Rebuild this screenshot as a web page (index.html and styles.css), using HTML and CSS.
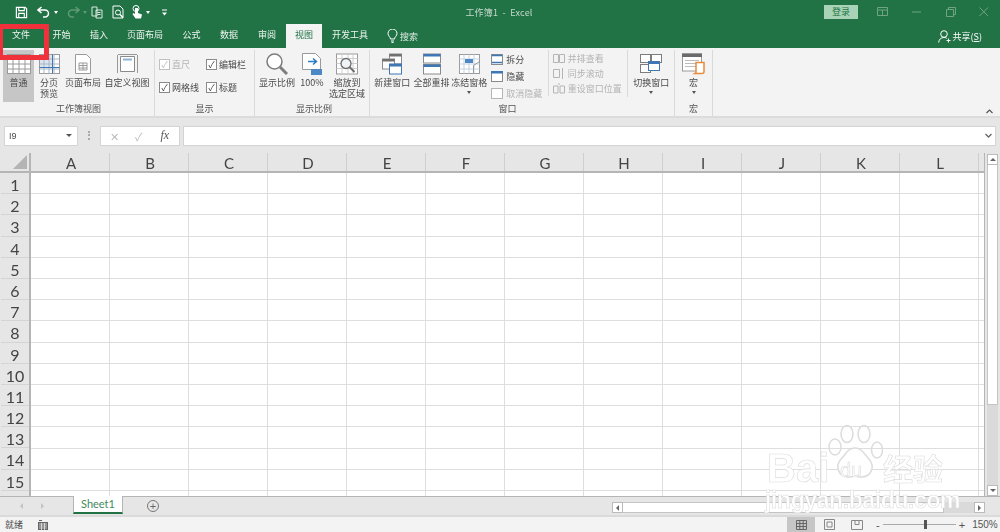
FILE: index.html
```html
<!DOCTYPE html>
<html lang="zh-CN">
<head>
    <meta charset="UTF-8">
    <meta name="viewport" content="width=device-width, initial-scale=1.0">
    <title>工作簿1 - Excel</title>
    <link rel="stylesheet" href="styles.css">
</head>
<body>
    <!-- Title bar -->
    <header class="titlebar">
        <div class="qat">
            <svg class="qat-save" width="13" height="13" viewBox="0 0 14 14"><path d="M1.500 1.500h9.500l1.500 1.500v9.500h-11z" fill="none" stroke="#fff" stroke-width="1.300"/><path d="M4 1.500v3.500h6v-3.500M4 12.500v-4.500h6v4.500" fill="none" stroke="#fff" stroke-width="1.200"/></svg>
            <svg class="qat-undo" width="14" height="12" viewBox="0 0 14 12"><path d="M4.500 1l-3.500 3 3.500 3M1.500 4h6.500a3.500 3.500 0 0 1 0 7h-2" fill="none" stroke="#fff" stroke-width="1.500"/></svg>
            <span class="qat-caret"></span>
            <svg class="qat-redo" width="14" height="12" viewBox="0 0 14 12"><path d="M9.500 1l3.500 3-3.500 3M12.500 4h-6.500a3.500 3.500 0 0 0 0 7h2" fill="none" stroke="#5f9a76" stroke-width="1.500"/></svg>
            <span class="qat-caret dim"></span>
            <svg class="qat-copy" width="12" height="13" viewBox="0 0 12 13"><path d="M1 1h5v9h-5zM5 4h6v8h-6z" fill="#217346" stroke="#dfe9e2"/><path d="M6.500 6.500h3M6.500 8.500h3" stroke="#dfe9e2"/></svg>
            <svg class="qat-preview" width="13" height="14" viewBox="0 0 13 14"><path d="M1 1h7l3 3v9h-10z" fill="none" stroke="#fff"/><circle cx="6" cy="7.500" r="2.500" fill="none" stroke="#fff"/><path d="M8 9.500l3 3" stroke="#fff" stroke-width="1.500"/></svg>
            <svg class="qat-touch" width="12" height="14" viewBox="0 0 12 14"><circle cx="5" cy="3.500" r="3" fill="none" stroke="#fff"/><path d="M4 3v6l-1.500-1-1 1 3 4.500h5.500l1-4-4-1.500v-5z" fill="#fff"/></svg>
            <span class="qat-caret"></span>
            <svg class="qat-more" width="7" height="7" viewBox="0 0 7 7"><path d="M1 1h5" stroke="#fff"/><path d="M1 3.500h5l-2.500 3z" fill="#fff"/></svg>
        </div>
        <div class="doc-title">工作簿1&nbsp; -&nbsp; Excel</div>
        <div class="win-controls">
            <button class="signin">登录</button>
            <svg class="ctl-ribbon" width="12" height="10" viewBox="0 0 12 10"><path d="M.5.500h10v8h-10zM.5 3h10M5.500 3v5.500" fill="none" stroke="#6fa583"/></svg>
            <svg class="ctl-min" width="10" height="2" viewBox="0 0 10 2"><path d="M0 1h9" stroke="#6fa583"/></svg>
            <svg class="ctl-max" width="10" height="10" viewBox="0 0 10 10"><path d="M.5 2.500h7v7h-7zM2.500 2.500v-2h7v7h-2" fill="none" stroke="#6fa583"/></svg>
            <svg class="ctl-close" width="10" height="10" viewBox="0 0 10 10"><path d="M.5.500l8.500 8.500M9 .5l-8.500 8.500" stroke="#6fa583"/></svg>
        </div>
    </header>

    <!-- Ribbon tabs -->
    <nav class="tabs">
        <a class="tab w42">文件</a>
        <a class="tab w39">开始</a>
        <a class="tab w36">插入</a>
        <a class="tab w56">页面布局</a>
        <a class="tab w37">公式</a>
        <a class="tab w38">数据</a>
        <a class="tab w38">审阅</a>
        <a class="tab w36 active">视图</a>
        <a class="tab w56">开发工具</a>
        <div class="search">
            <svg width="11" height="14" viewBox="0 0 11 14"><path d="M3.500 10c0-2-2.500-3-2.500-5.500a4.500 4.500 0 0 1 9 0c0 2.500-2.500 3.500-2.500 5.500zM4 12h3M4.500 13.500h2" fill="none" stroke="#fff"/></svg>
            <span>搜索</span>
        </div>
        <div class="share">
            <svg width="13" height="13" viewBox="0 0 13 13"><circle cx="6" cy="4" r="3.300" fill="none" stroke="#fff"/><path d="M.7 12.500c.3-3 2-5 5.300-5 1.200 0 2 .2 2.800.8M8.500 10.500h4M10.500 8.500v4" fill="none" stroke="#fff"/></svg>
            <span>共享(<u>S</u>)</span>
        </div>
    </nav>

    <!-- Ribbon -->
    <section class="ribbon">
        <div class="group g-book">
            <div class="group-body">
                <div class="big selected w31">
                    <svg class="ico" width="24" height="20" viewBox="0 0 24 20"><rect x=".5" y=".5" width="23" height="19" fill="#fff" stroke="#9a9a9a"/><path d="M.5 5h23M.5 10h23M.5 15h23M6 .5v19M12 .5v19M18 .5v19" stroke="#9a9a9a"/></svg>
                    <span>普通</span>
                </div>
                <div class="big w28">
                    <svg class="ico" width="21" height="20" viewBox="0 0 21 20"><rect x=".5" y=".5" width="20" height="19" fill="#fff" stroke="#9a9a9a"/><rect x="1" y="1" width="12" height="12" fill="#dbe5f1"/><path d="M.5 5h20M.5 10h20M.5 15h20M5 .5v19M10 .5v19M15 .5v19" stroke="#a9b5c4"/><path d="M13.500 .5v19M.5 13.500h20" stroke="#3f77b5"/></svg>
                    <span>分页<br>预览</span>
                </div>
                <div class="big w36 gap-right">
                    <svg class="ico" width="16" height="20" viewBox="0 0 16 20"><path d="M.5.500h11l4 4v15h-15z" fill="#fff" stroke="#9a9a9a"/><path d="M4 9h8v7h-8zM4 11.500h8M4 14h8M8 9v7" fill="none" stroke="#9a9a9a"/></svg>
                    <span>页面布局</span>
                </div>
                <div class="big w46">
                    <svg class="ico" width="21" height="20" viewBox="0 0 21 20"><path d="M3.500 2.500h14v15h-14z" fill="#fff" stroke="#8a8a8a"/><rect x="6" y="4.500" width="9" height="2" fill="#8fb2d6"/><path d="M.5 1v18M20.500 1v18M1 .5h19" stroke="#9a9a9a" fill="none"/></svg>
                    <span>自定义视图</span>
                </div>
            </div>
            <div class="group-label">工作簿视图</div>
        </div>

        <div class="group g-show">
            <div class="check-grid">
                <label class="check off"><i>✓</i>直尺</label>
                <label class="check"><i>✓</i>编辑栏</label>
                <label class="check"><i>✓</i>网格线</label>
                <label class="check"><i>✓</i>标题</label>
            </div>
            <div class="group-label">显示</div>
        </div>

        <div class="group g-zoom">
            <div class="group-body">
                <div class="big w36">
                    <svg class="ico" width="22" height="22" viewBox="0 0 22 22"><circle cx="8.500" cy="8.500" r="7.500" fill="#fff" stroke="#7d7d7d" stroke-width="1.500"/><path d="M14 14l7 7" stroke="#7d7d7d" stroke-width="3"/></svg>
                    <span>显示比例</span>
                </div>
                <div class="big w34">
                    <svg class="ico" width="20" height="22" viewBox="0 0 20 22"><path d="M.5.500h13l5 5v11h-18z" fill="#fff" stroke="#9a9a9a"/><path d="M6 8.500h8M11 5.500l3.500 3-3.500 3" fill="none" stroke="#2b7cc0" stroke-width="1.500"/><rect x="9" y="16" width="11" height="6" fill="#4b88c4"/></svg>
                    <span>100%</span>
                </div>
                <div class="big w36">
                    <svg class="ico" width="22" height="21" viewBox="0 0 22 21"><rect x=".5" y=".5" width="21" height="20" fill="#fff" stroke="#9a9a9a"/><path d="M.5 5h21M.5 10h21M.5 15h21M6 .5v20M12 .5v20M17 .5v20" stroke="#cdcdcd"/><circle cx="10" cy="10" r="5" fill="#eef3f7" stroke="#6d6d6d" stroke-width="1.300"/><path d="M13.500 13.500l5 5" stroke="#6d6d6d" stroke-width="2"/></svg>
                    <span>缩放到<br>选定区域</span>
                </div>
            </div>
            <div class="group-label">显示比例</div>
        </div>

        <div class="group g-window">
            <div class="group-body">
                <div class="big first-win">
                    <svg class="ico" width="20" height="21" viewBox="0 0 20 21"><rect x="7.500" y=".5" width="12" height="10" fill="#fff" stroke="#8a8a8a"/><rect x="7.500" y=".5" width="12" height="2.500" fill="#707070"/><rect x=".5" y="5.500" width="12" height="10" fill="#fff" stroke="#8a8a8a"/><rect x=".5" y="5.500" width="12" height="2.500" fill="#707070"/><rect x="7.500" y="10.500" width="12" height="10" fill="#fff" stroke="#3f77b5"/><rect x="7.500" y="10.500" width="12" height="2.500" fill="#3f77b5"/></svg>
                    <span>新建窗口</span>
                </div>
                <div class="big w38">
                    <svg class="ico" width="18" height="21" viewBox="0 0 18 21"><rect x=".5" y=".5" width="17" height="9" fill="#fff" stroke="#8a8a8a"/><rect x=".5" y=".5" width="17" height="2.500" fill="#3f77b5"/><rect x=".5" y="11" width="17" height="9.500" fill="#fff" stroke="#8a8a8a"/><rect x=".5" y="11" width="17" height="2.500" fill="#3f77b5"/></svg>
                    <span>全部重排</span>
                </div>
                <div class="big w38">
                    <svg class="ico" width="21" height="20" viewBox="0 0 21 20"><rect x=".5" y=".5" width="20" height="19" fill="#fff" stroke="#9a9a9a"/><path d="M.5 5h20M.5 10h20M.5 15h20M5 .5v19M10 .5v19M15 .5v19" stroke="#c4d3e3"/><rect x="6" y="5" width="8" height="4" fill="#4b88c4"/><path d="M14.500 19.500v-8l6-4" fill="none" stroke="#9a9a9a"/></svg>
                    <span>冻结窗格</span>
                    <b class="caret"></b>
                </div>
                <div class="small-col w58">
                    <div class="small"><svg width="12" height="11" viewBox="0 0 12 11"><rect x=".5" y=".5" width="11" height="10" fill="#fff" stroke="#8a8a8a"/><path d="M1 1.500h10M1 8.500h10" stroke="#3f77b5" stroke-width="1.500"/></svg>拆分</div>
                    <div class="small"><svg width="12" height="11" viewBox="0 0 12 11"><rect x=".5" y=".5" width="11" height="10" fill="#fff" stroke="#8a8a8a"/><rect x="0" y="0" width="12" height="2.500" fill="#3f77b5"/></svg>隐藏</div>
                    <div class="small off"><svg width="12" height="11" viewBox="0 0 12 11"><rect x=".5" y=".5" width="11" height="10" fill="#fff" stroke="#b5b5b5"/></svg>取消隐藏</div>
                </div>
                <div class="small-col w80 with-rule">
                    <div class="small off"><svg width="12" height="11" viewBox="0 0 12 11"><path d="M.5 1.500h5v8h-5zM6.500 1.500h5v8h-5z" fill="none" stroke="#b5b5b5"/></svg>并排查看</div>
                    <div class="small off"><svg width="12" height="11" viewBox="0 0 12 11"><path d="M.5 1.500h6v8h-6zM9.500 0v11" fill="none" stroke="#b5b5b5"/></svg>同步滚动</div>
                    <div class="small off"><svg width="12" height="11" viewBox="0 0 12 11"><path d="M.5 3h4.500v7h-4.500zM7 3h4.500v7h-4.500zM5 1h2" fill="none" stroke="#b5b5b5"/></svg>重设窗口位置</div>
                </div>
                <div class="big w47 with-rule">
                    <svg class="ico" width="22" height="20" viewBox="0 0 22 20"><rect x=".5" y=".5" width="10" height="8" fill="#fff" stroke="#7d7d7d"/><rect x="11.500" y=".5" width="10" height="8" fill="#fff" stroke="#7d7d7d"/><rect x=".5" y="10.500" width="10" height="8" fill="#fff" stroke="#7d7d7d"/><rect x="8.500" y="7.500" width="11" height="9" fill="#fff" stroke="#3f77b5"/><rect x="8.500" y="7.500" width="11" height="2.500" fill="#3f77b5"/></svg>
                    <span>切换窗口</span>
                    <b class="caret"></b>
                </div>
            </div>
            <div class="group-label label-window">窗口</div>
        </div>

        <div class="group g-macro">
            <div class="group-body">
                <div class="big w38">
                    <svg class="ico" width="23" height="21" viewBox="0 0 23 21"><rect x=".5" y=".5" width="19" height="17" fill="#fff" stroke="#9a9a9a"/><rect x="0" y="0" width="20" height="3.500" fill="#6b6b6b"/><path d="M3 7h14M3 10h14M3 13h14" stroke="#bcbcbc"/><path d="M14 9h8v9a2 2 0 0 1-2 2h-7a2 2 0 0 0 1-2z" fill="#fff" stroke="#e88b3a" stroke-width="1.500"/></svg>
                    <span>宏</span>
                    <b class="caret"></b>
                </div>
            </div>
            <div class="group-label">宏</div>
        </div>
        <svg class="collapse" width="7" height="5" viewBox="0 0 7 5"><path d="M.5 4l3-3 3 3" fill="none" stroke="#555" stroke-width="1.200"/></svg>
    </section>

    <!-- Formula bar -->
    <section class="formula">
        <div class="namebox">I9<b class="caret"></b></div>
        <div class="grip"></div>
        <div class="fx-box">
            <span class="fx-x">✕</span><span class="fx-ok">✓</span><em>fx</em>
        </div>
        <div class="fx-input"><svg width="7" height="5" viewBox="0 0 7 5"><path d="M.5 1l3 3 3-3" fill="none" stroke="#666" stroke-width="1.300"/></svg></div>
    </section>

    <!-- Sheet -->
    <main class="sheet-wrap">
        <div class="sheet">
            <div class="col-head">
                <div class="corner"><span></span></div>
                <div>A</div><div>B</div><div>C</div><div>D</div><div>E</div><div>F</div>
                <div>G</div><div>H</div><div>I</div><div>J</div><div>K</div><div>L</div>
                <div class="stub"></div>
            </div>
            <div class="sheet-body">
                <div class="row-head">
                    <div>1</div><div>2</div><div>3</div><div>4</div><div>5</div>
                    <div>6</div><div>7</div><div>8</div><div>9</div><div>10</div>
                    <div>11</div><div>12</div><div>13</div><div>14</div><div>15</div>
                </div>
                <div class="cells"></div>
            </div>
        </div>
        <div class="vscroll">
            <div class="sb-btn"><span class="tri up"></span></div>
            <div class="sb-thumb"></div>
            <div class="sb-track"></div>
            <div class="sb-btn"><span class="tri down"></span></div>
        </div>
    </main>

    <!-- Sheet tabs -->
    <section class="sheetbar">
        <div class="sheet-nav"><span class="tri left"></span><span class="tri right"></span></div>
        <div class="sheet-tab">Sheet1</div>
        <div class="add-sheet">+</div>
        <div class="hscroll">
            <div class="sb-btn"><span class="tri left dark"></span></div>
            <div class="h-thumb"></div>
            <div class="h-rest"></div>
            <div class="sb-btn"><span class="tri right dark"></span></div>
        </div>
    </section>

    <!-- Status bar -->
    <footer class="statusbar">
        <span class="ready">就绪</span>
        <svg class="macro-ico" width="10" height="10" viewBox="0 0 10 10"><path d="M0 2h10v8h-10z" fill="#666"/><path d="M1 4h8M1 6h8M1 8h8M3.500 3v7M6.500 3v7" stroke="#f3f3f3" stroke-width=".7"/><path d="M1 .5h3" stroke="#666"/></svg>
        <div class="views">
            <div class="view selected"><svg width="11" height="10" viewBox="0 0 11 10"><path d="M.5.500h10v9h-10zM.5 3.500h10M.5 6.500h10M3.800.500v9M7.200.500v9" fill="none" stroke="#666"/></svg></div>
            <div class="view"><svg width="11" height="11" viewBox="0 0 11 11"><path d="M.5.500h10v10h-10zM3 3h5v5h-5z" fill="none" stroke="#888"/></svg></div>
            <div class="view"><svg width="12" height="10" viewBox="0 0 12 10"><path d="M.5.500h11v9h-11zM4 .5v4h4v-4" fill="none" stroke="#888"/></svg></div>
        </div>
        <div class="zoom">
            <span>-</span>
            <div class="slider"><i></i></div>
            <span>+</span>
        </div>
        <span class="pct">150%</span>
    </footer>

    <!-- Red highlight drawn on the screenshot -->
    <div class="marker"></div>

    <!-- Watermark -->
    <div class="watermark">
        <div class="wm-top">
            <span class="wm-bai">Bai</span>
            <svg class="wm-paw" width="56" height="56" viewBox="0 0 56 56" fill="none" stroke="#dcdcdc" stroke-width="1.500">
                <ellipse cx="8" cy="23" rx="6" ry="8"/><ellipse cx="20" cy="10" rx="6" ry="8.500"/><ellipse cx="37" cy="10" rx="6" ry="8.500"/><ellipse cx="50" cy="26" rx="5.500" ry="8"/>
                <path d="M28 24c7 0 9 6 14 11 6 7 3 18-8 18-3 0-4-1-6-1s-3 1-6 1c-11 0-14-11-8-18 5-5 7-11 14-11z" fill="#fff"/>
            </svg>
            <span class="wm-du">du</span>
            <span class="wm-cn">经验</span>
        </div>
        <div class="wm-url">jingyan.baidu.com</div>
    </div>
</body>
</html>
```

FILE: styles.css
```css
* {
    box-sizing: border-box;
}
html, body {
    margin: 0;
    padding: 0;
}
body {
    width: 1000px;
    height: 532px;
    overflow: hidden;
    position: relative;
    background-color: #e6e6e6;
    font-family: "Noto Sans CJK SC", "Noto Sans", sans-serif;
    font-size: 9px;
    color: #4a4a4a;
    filter: blur(0.45px);
}
svg {
    display: block;
    flex: none;
}

/* title bar */
.titlebar {
    height: 24px;
    background-color: #217346;
    display: flex;
    align-items: center;
    position: relative;
}
.qat {
    display: flex;
    align-items: center;
    padding-left: 15px;
}
.qat-undo { margin-left: 9px; }
.qat-redo { margin-left: 8px; }
.qat-copy { margin-left: 4px; }
.qat-preview { margin-left: 9px; }
.qat-touch { margin-left: 6px; }
.qat-more { margin-left: 11px; }
.qat-caret {
    width: 0;
    height: 0;
    margin-left: 3px;
    border: 2px solid transparent;
    border-top: 3px solid #fff;
    border-bottom: 0;
}
.qat-caret.dim {
    border-top-color: #5f9a76;
}
.doc-title {
    position: absolute;
    left: 399px;
    width: 200px;
    text-align: center;
    color: #c5d9cc;
    font-size: 9px;
    letter-spacing: 0.2px;
}
.win-controls {
    margin-left: auto;
    display: flex;
    align-items: center;
}
.signin {
    width: 34px;
    height: 14px;
    padding: 0;
    border: 0;
    background-color: #a9d3b7;
    color: #217346;
    font: inherit;
    font-size: 9px;
    line-height: 14px;
}
.ctl-ribbon { margin-left: 19px; }
.ctl-min { margin-left: 23px; }
.ctl-max { margin-left: 24px; }
.ctl-close { margin-left: 23px; margin-right: 11px; }

/* tabs */
.tabs {
    height: 24px;
    background-color: #217346;
    display: flex;
    align-items: center;
    color: #fff;
}
.tab {
    height: 24px;
    line-height: 22px;
    text-align: center;
    color: #eef5f0;
}
.tab.active {
    height: 24px;
    background-color: #f3f3f3;
    color: #217346;
}
.w42 { width: 42px; }
.w39 { width: 39px; }
.w36 { width: 36px; }
.w56 { width: 56px; }
.w37 { width: 37px; }
.w38 { width: 38px; }
.search {
    margin-left: 9px;
    display: flex;
    align-items: center;
    gap: 2px;
    color: #e0ece4;
}
.share {
    margin-left: auto;
    margin-right: 18px;
    display: flex;
    align-items: center;
    gap: 2px;
}

/* ribbon */
.ribbon {
    height: 70px;
    background-color: #f3f3f3;
    border-bottom: 2px solid #dcdcdc;
    display: flex;
    position: relative;
}
.group {
    position: relative;
    display: flex;
    flex-direction: column;
    height: 66px;
    margin-top: 2px;
    border-right: 1px solid #dadada;
}
.group-body {
    display: flex;
    height: 52px;
}
.group-label {
    height: 14px;
    line-height: 14px;
    text-align: center;
    color: #555;
}
.label-window {
    padding-right: 29px;
}
.g-book { width: 155px; padding-left: 3px; }
.g-show { width: 100px; }
.g-zoom { width: 115px; padding-left: 4px; }
.g-window { width: 305px; }
.g-macro { width: 38px; }
.big {
    display: flex;
    flex-direction: column;
    align-items: center;
    height: 52px;
    line-height: 11px;
    text-align: center;
    white-space: nowrap;
}
.big .ico {
    height: 22px;
    margin: 3px 0 2px;
}
.big.selected {
    background-color: #c6c6c6;
}
.w31 { width: 31px; }
.w28 { width: 28px; margin-left: 1px; }
.w34 { width: 34px; }
.w47 { width: 47px; }
.w46 { width: 46px; margin-left: 3px; }
.gap-right { margin-left: 2px; }
.first-win { width: 41px; margin-left: 2px; }
.caret {
    display: block;
    width: 0;
    height: 0;
    margin-top: 3px;
    border: 2px solid transparent;
    border-top: 3px solid #555;
    border-bottom: 0;
}
.check-grid {
    height: 52px;
    display: grid;
    grid-template-columns: 47px 50px;
    grid-template-rows: 23px 23px;
    padding: 3px 0 0 4px;
}
.check {
    display: flex;
    align-items: center;
    gap: 2px;
    white-space: nowrap;
}
.check i {
    width: 11px;
    height: 11px;
    background-color: #fff;
    border: 1px solid #8a8a8a;
    font-style: normal;
    font-size: 9px;
    line-height: 9px;
    text-align: center;
    color: #444;
}
.check.off {
    color: #b4b4b4;
}
.check.off i {
    border-color: #c0c0c0;
    color: #bbb;
}
.small-col {
    display: flex;
    flex-direction: column;
    padding-top: 1px;
}
.w58 { width: 57px; margin-left: 3px; }
.w80 { width: 80px; padding-left: 4px; }
.with-rule {
    border-left: 1px solid #dadada;
    height: 46px;
}
.big.with-rule {
    height: 52px;
    border-image: linear-gradient(#dadada 46px, transparent 46px) 1;
}
.small {
    height: 17px;
    display: flex;
    align-items: center;
    gap: 3px;
    white-space: nowrap;
}
.small.off {
    color: #b4b4b4;
}
.collapse {
    position: absolute;
    left: 986px;
    top: 61px;
}

/* formula bar */
.formula {
    height: 35px;
    background-color: #e6e6e6;
    display: flex;
    align-items: center;
    padding: 0 4px;
}
.namebox {
    width: 74px;
    height: 20px;
    background-color: #fff;
    border: 1px solid #d4d4d4;
    padding-left: 4px;
    display: flex;
    align-items: center;
    justify-content: space-between;
    padding-right: 5px;
    font-family: "Liberation Sans", sans-serif;
}
.namebox .caret {
    margin-top: 0;
    border-width: 3px;
    border-top-width: 3px;
    border-bottom: 0;
}
.grip {
    width: 2px;
    height: 9px;
    margin: 0 10px 0 10px;
    border-left: 2px dotted #aaa;
}
.fx-box {
    width: 80px;
    height: 20px;
    background-color: #fff;
    border: 1px solid #d4d4d4;
    display: flex;
    align-items: center;
    color: #bbb;
    font-size: 11px;
}
.fx-x { margin-left: 9px; }
.fx-ok { margin-left: 16px; }
.fx-box em {
    margin-left: 18px;
    color: #555;
    font-size: 12px;
    font-family: "Liberation Serif", serif;
}
.fx-input {
    width: 813px;
    height: 20px;
    margin-left: 3px;
    background-color: #fff;
    border: 1px solid #d4d4d4;
    display: flex;
    align-items: center;
    justify-content: flex-end;
    padding-right: 3px;
}

/* sheet */
.sheet-wrap {
    height: 343px;
    display: flex;
    background-color: #e6e6e6;
}
.sheet {
    width: 985px;
    height: 343px;
    border-right: 1px solid #b5b5b5;
}
.col-head {
    height: 20px;
    display: flex;
    border-bottom: 2px solid #b5b5b5;
    font-family: "Lato", "Liberation Sans", sans-serif;
    font-size: 15px;
    color: #444;
}
.col-head div {
    width: 79px;
    padding-left: 2px;
    line-height: 20px;
    text-align: center;
    border-right: 1px solid #cfcfcf;
}
.col-head .corner {
    width: 31px;
    padding: 0;
    position: relative;
    border-right: 2px solid #b5b5b5;
}
.corner span {
    position: absolute;
    right: 2px;
    bottom: 2px;
    width: 0;
    height: 0;
    border-left: 14px solid transparent;
    border-bottom: 14px solid #b4b4b4;
}
.col-head .stub {
    width: 4px;
    padding: 0;
    border-right: 0;
}
.sheet-body {
    display: flex;
    height: 323px;
}
.row-head {
    width: 31px;
    display: grid;
    grid-template-rows: repeat(15, 21.2px);
    border-right: 2px solid #b5b5b5;
    padding-left: 1px;
    font-family: "Lato", "Liberation Sans", sans-serif;
    font-size: 16px;
    color: #444;
    text-align: center;
}
.row-head div {
    line-height: 24px;
    border-bottom: 1px solid #d4d4d4;
}
.cells {
    flex: 1;
    background-color: #fff;
    background-image:
        repeating-linear-gradient(to right, transparent 0, transparent 78px, #dedede 78px, #dedede 79px),
        repeating-linear-gradient(to bottom, transparent 0, transparent 20.2px, #dedede 20.2px, #dedede 21.2px);
}
.vscroll {
    width: 15px;
    height: 343px;
    display: flex;
    flex-direction: column;
    padding: 1px 2px 0 2px;
}
.sb-btn {
    width: 11px;
    height: 11px;
    flex: none;
    background-color: #fff;
    border: 1px solid #bbb;
    display: flex;
    align-items: center;
    justify-content: center;
}
.sb-thumb {
    height: 240px;
    flex: none;
    background-color: #fff;
    border: 1px solid #c4c4c4;
    border-top: 0;
}
.sb-track {
    flex: 1;
    background-color: #dadada;
}
.tri {
    display: block;
    width: 0;
    height: 0;
    border: 3px solid transparent;
}
.tri.up { border-bottom: 3px solid #666; border-top: 0; }
.tri.down { border-top: 3px solid #666; border-bottom: 0; }
.tri.left { border-right: 3px solid #c2c2c2; border-left: 0; }
.tri.right { border-left: 3px solid #c2c2c2; border-right: 0; }
.tri.dark { border-left-color: transparent; border-right-color: transparent; }
.tri.left.dark { border-right-color: #666; }
.tri.right.dark { border-left-color: #666; }

/* sheet tabs */
.sheetbar {
    height: 21px;
    position: relative;
    background-color: #e6e6e6;
    border-top: 1px solid #b5b5b5;
    border-bottom: 2px solid #dadada;
    display: flex;
    align-items: flex-start;
}
.sheet-nav {
    width: 73px;
    padding: 6px 0 0 20px;
    display: flex;
    gap: 18px;
}
.sheet-tab {
    width: 50px;
    height: 18px;
    margin-top: -1px;
    background-color: #fff;
    border-left: 1px solid #b5b5b5;
    border-right: 1px solid #b5b5b5;
    border-bottom: 2px solid #217346;
    color: #3f8a60;
    font-family: "Lato", "Liberation Sans", sans-serif;
    font-size: 11px;
    line-height: 16px;
    text-align: center;
}
.add-sheet {
    width: 12px;
    height: 12px;
    margin: 3px 0 0 24px;
    border: 1px solid #777;
    border-radius: 50%;
    color: #666;
    font-family: "Liberation Sans", sans-serif;
    font-size: 11px;
    line-height: 10px;
    text-align: center;
}
.hscroll {
    position: absolute;
    left: 612px;
    top: 5px;
    width: 375px;
    display: flex;
}
.h-thumb {
    width: 321px;
    height: 11px;
    background-color: #fff;
    border: 1px solid #c4c4c4;
    border-left: 0;
}
.h-rest {
    width: 30px;
    background-color: #dadada;
    height: 11px;
}

/* status bar */
.statusbar {
    height: 15px;
    background-color: #f3f3f3;
    display: flex;
    align-items: center;
    position: relative;
    padding-left: 5px;
}
.ready {
    white-space: nowrap;
    flex: none;
}
.macro-ico {
    margin-left: 15px;
}
.views {
    margin-left: 739px;
    display: flex;
}
.view {
    width: 28px;
    height: 15px;
    display: flex;
    align-items: center;
    justify-content: center;
}
.view.selected {
    background-color: #c6c6c6;
}
.zoom {
    margin-left: 5px;
    display: flex;
    align-items: center;
    gap: 3px;
    font-family: "Liberation Sans", sans-serif;
    font-size: 11px;
    color: #555;
}
.slider {
    width: 73px;
    height: 1px;
    position: relative;
    background-color: #aaa;
}
.slider i {
    position: absolute;
    left: 41px;
    top: -4px;
    width: 3px;
    height: 9px;
    background-color: #555;
}
.pct {
    margin-left: 7px;
    white-space: nowrap;
    font-family: "Liberation Sans", sans-serif;
    font-size: 10px;
    color: #555;
}

/* red marker */
.marker {
    position: absolute;
    left: 0;
    top: 24px;
    width: 49px;
    height: 36px;
    border: 5px solid #f0303a;
    border-left-width: 3px;
}

/* watermark */
.watermark {
    position: absolute;
    left: 765px;
    top: 424px;
    width: 190px;
    color: #fff;
    -webkit-text-stroke: 0.6px #dcdcdc;
    font-family: "Liberation Sans", sans-serif;
    pointer-events: none;
}
.wm-top {
    height: 66px;
    position: relative;
}
.wm-bai {
    position: absolute;
    left: 2px;
    top: 22px;
    font-size: 40px;
    font-weight: bold;
    line-height: 44px;
}
.wm-paw {
    position: absolute;
    left: 62px;
    top: 0;
}
.wm-du {
    position: absolute;
    left: 75px;
    top: 33px;
    font-size: 20px;
    line-height: 26px;
}
.wm-cn {
    position: absolute;
    left: 118px;
    top: 23px;
    font-family: "Noto Sans CJK SC", sans-serif;
    font-weight: bold;
    font-size: 30px;
    line-height: 40px;
}
.wm-url {
    font-size: 23px;
    font-weight: bold;
    line-height: 20px;
    letter-spacing: -0.4px;
    white-space: nowrap;
}
```
